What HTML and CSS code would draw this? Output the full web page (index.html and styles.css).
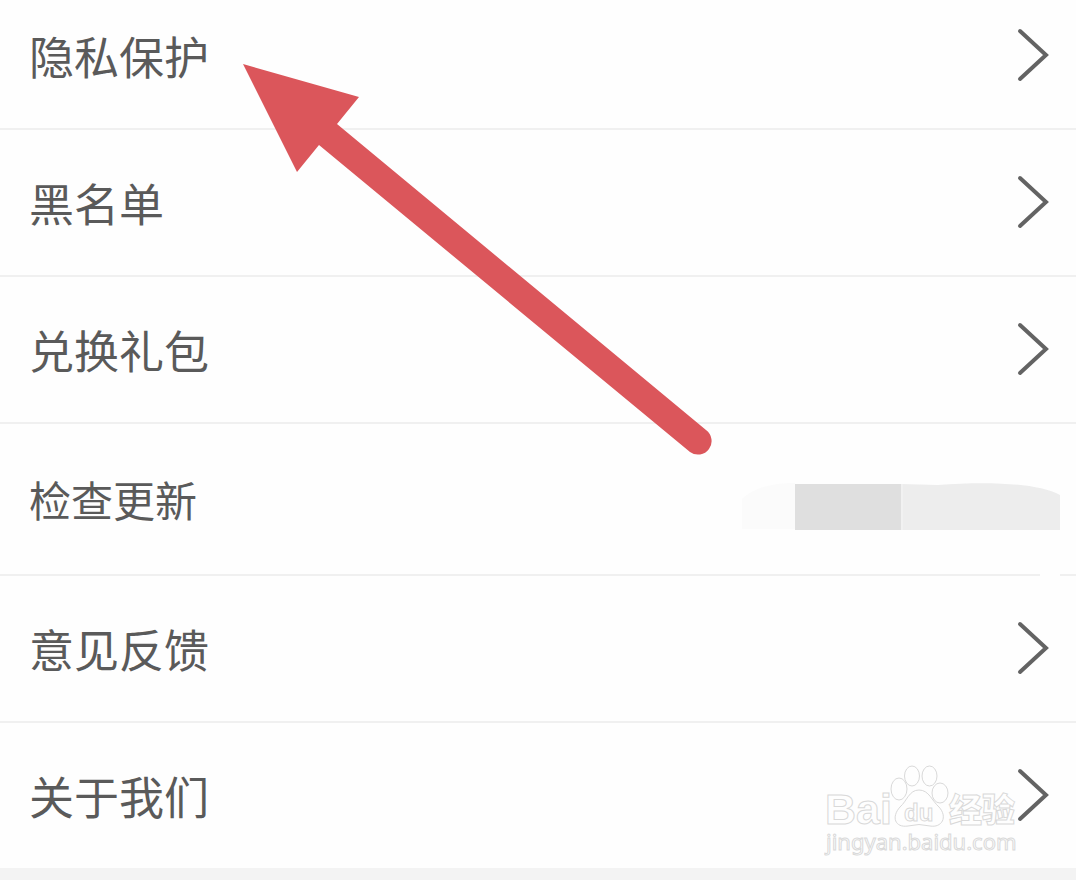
FILE: index.html
```html
<!DOCTYPE html>
<html lang="zh-CN">
<head>
<meta charset="utf-8">
<meta name="viewport" content="width=device-width, initial-scale=1">
<title>设置</title>
<link rel="stylesheet" href="styles.css">
</head>
<body>
<main class="screen">
  <ul class="menu">
    <li class="item"><a class="row" href="#privacy"><span class="label">隐私保护</span><svg class="chevron" viewBox="0 0 32 54" aria-hidden="true"><path d="M3 3 29 27 3 51"/></svg></a></li>
    <li class="item"><a class="row" href="#blocklist"><span class="label">黑名单</span><svg class="chevron" viewBox="0 0 32 54" aria-hidden="true"><path d="M3 3 29 27 3 51"/></svg></a></li>
    <li class="item"><a class="row" href="#gift"><span class="label">兑换礼包</span><svg class="chevron" viewBox="0 0 32 54" aria-hidden="true"><path d="M3 3 29 27 3 51"/></svg></a></li>
    <li class="item item-update"><a class="row row-update" href="#update"><span class="label label-small">检查更新</span><svg class="smudge" viewBox="0 0 322 50" aria-hidden="true">
      <path fill="#fbfbfb" d="M4 18Q20 2 57 2V48H4Z"/>
      <path fill="#dfdfdf" d="M57 3H163V49H57Z"/>
      <path fill="#ededed" d="M163 3 200 4C250 0 300 2 322 14V49H163Z"/>
      <path fill="#f1f1f1" d="M163 3H165V49H163Z"/>
    </svg></a></li>
    <li class="item"><a class="row" href="#feedback"><span class="label">意见反馈</span><svg class="chevron" viewBox="0 0 32 54" aria-hidden="true"><path d="M3 3 29 27 3 51"/></svg></a></li>
    <li class="item"><a class="row" href="#about"><span class="label">关于我们</span><svg class="chevron" viewBox="0 0 32 54" aria-hidden="true"><path d="M3 3 29 27 3 51"/></svg></a></li>
  </ul>
  <svg class="arrow" viewBox="0 0 470 392" aria-hidden="true">
    <path d="M0 0 116 33 94 60 463 366A13 13 0 0 1 447 388L76 81 54 108Z"/>
  </svg>
  <svg class="watermark" viewBox="0 0 200 98" role="img" aria-label="Baidu 经验">
    <text class="mark-latin" x="1" y="59">Bai</text>
    <path d="M95 25C105 25 108 36 115 42C124 52 118 63 106 61Q95 58 84 61C71 63 67 52 76 42C83 36 85 25 95 25Z"/>
    <ellipse cx="75" cy="24" rx="8" ry="11"/>
    <ellipse cx="88" cy="11" rx="7.5" ry="10"/>
    <ellipse cx="105.500" cy="11" rx="7.5" ry="10"/>
    <ellipse cx="116" cy="28" rx="8" ry="10"/>
    <text class="mark-du" x="80" y="56">du</text>
    <text class="mark-han" x="125" y="57">经验</text>
    <text class="mark-url" x="2" y="85">jingyan.baidu.com</text>
  </svg>
</main>
</body>
</html>
```
FILE: styles.css
```css
* {
  box-sizing: border-box;
}

body {
  margin: 0;
  background: #f3f3f3;
  color: #5a5a5a;
  font-family: "Noto Sans CJK SC", "Noto Sans", sans-serif;
}

.screen {
  position: relative;
  overflow: hidden;
}

.menu {
  list-style: none;
  margin: -17px 0 0;
  padding: 0;
  background: #fefefe;
}

.item {
  border-bottom: 2px solid #f0f0f0;
}

.item:last-child {
  border-bottom: 0;
}

.item-update {
  position: relative;
}

/* Break in the divider below the version text */
.item-update::after {
  content: "";
  position: absolute;
  right: 16px;
  bottom: -2px;
  width: 20px;
  height: 2px;
  background: #fefefe;
}

.row {
  display: flex;
  align-items: center;
  justify-content: space-between;
  min-height: 145px;
  padding: 0 27px 0 29px;
  color: inherit;
  text-decoration: none;
}

.row-update {
  min-height: 150px;
  padding-right: 16px;
}

.label {
  font-size: 45px;
  line-height: 64px;
}

.label-small {
  font-size: 42px;
}

.chevron {
  width: 32px;
  height: 54px;
  margin-bottom: 2px;
  fill: none;
  stroke: #636363;
  stroke-width: 4;
  stroke-linecap: round;
}

.smudge {
  width: 322px;
  height: 50px;
  margin-top: 14px;
}

.arrow {
  position: absolute;
  top: 64px;
  left: 243px;
  width: 470px;
  height: 392px;
  fill: #db565b;
}

.watermark {
  position: absolute;
  right: 52px;
  bottom: 5px;
  width: 200px;
  height: 98px;
  fill: #fefefe;
  stroke: #d9d9d9;
  stroke-width: 1;
}

.mark-latin,
.mark-du {
  font-family: "Liberation Sans", Arial, sans-serif;
  font-weight: 700;
}

.mark-latin {
  font-size: 43px;
}

.mark-du {
  font-size: 24px;
}

.mark-han {
  font-size: 33px;
  font-weight: 900;
}

.mark-url {
  font-family: "Noto Sans", sans-serif;
  font-size: 22px;
}
```
